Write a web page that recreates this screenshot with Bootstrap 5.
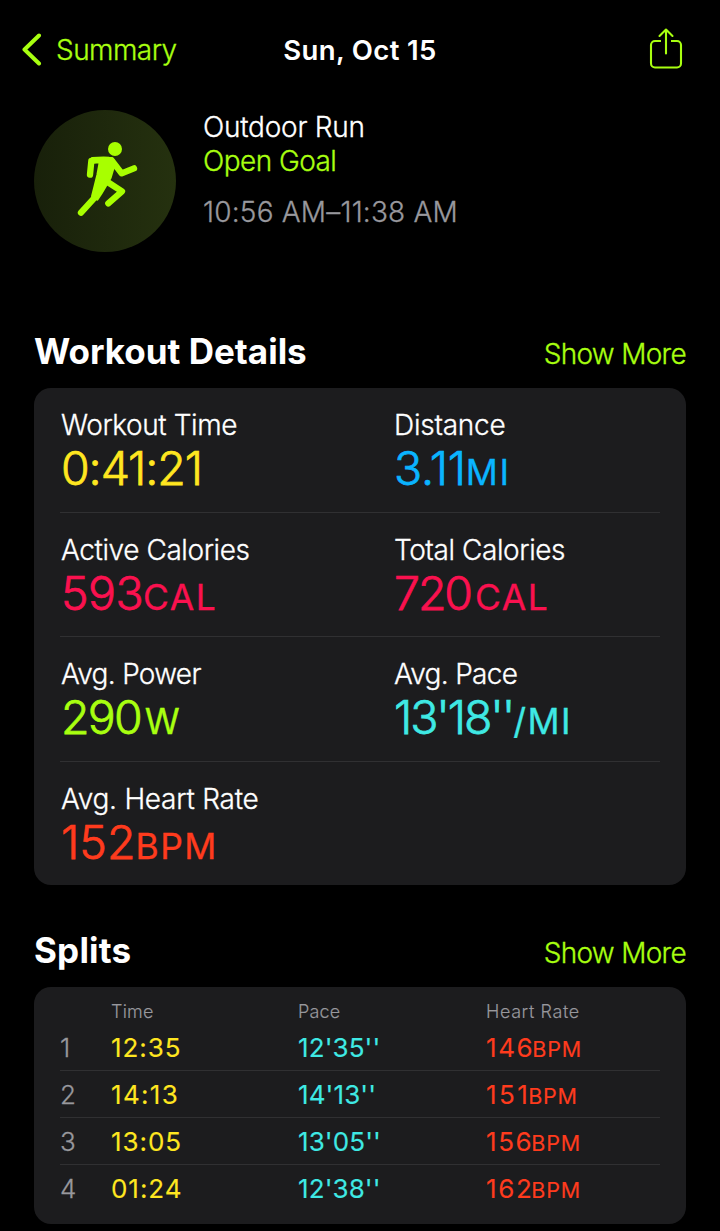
<!DOCTYPE html>
<html lang="en" data-bs-theme="dark">
<head>
<meta charset="utf-8">
<meta name="viewport" content="width=device-width, initial-scale=1">
<title>Workout</title>
<link href="https://cdn.jsdelivr.net/npm/bootstrap@5.3.0/dist/css/bootstrap.min.css" rel="stylesheet">
<style>
body{background:#000;color:#fff;font-family:Inter,"Liberation Sans",sans-serif;font-size:28px;line-height:34px;font-weight:300;-webkit-text-stroke:.3px;height:1231px;overflow:hidden}
a{color:inherit;text-decoration:none}
.lime{color:#a8ff10}.yellow{color:#ffe620}.blue{color:#0ab4ff}.pink{color:#fa114f}.aqua{color:#3fe9e4}.red{color:#ff3b1d}.dim{color:#98989d}
/* letter tracking steps */
.tk-2{letter-spacing:-.25px}.tk-4{letter-spacing:-.42px}.tk-5{letter-spacing:-.55px}.tk-7{letter-spacing:-.7px}.tk-11{letter-spacing:-1.1px}.tk-20{letter-spacing:-2.1px}.tk-18{letter-spacing:-1.8px}
.tk2{letter-spacing:.2px}.tk4{letter-spacing:.35px}.tk7{letter-spacing:.6px}
.topbar{height:99px;padding:0 22px}
.topbar>*{flex:1 1 0}
.topbar .back-label{margin-left:14px}
.share{margin-right:15px}
.day{font-weight:600;font-size:27.5px;-webkit-text-stroke:0}
.hero{height:230px;padding:11px 34px 0;gap:27px}
.when{margin-top:17px}
.sect-head{height:59px;padding:0 34px}
.sect-title{font-size:35px;line-height:44px;font-weight:700;-webkit-text-stroke:0}
.panel{margin:0 34px;background:#1c1c1e;border-radius:17px;padding:0 26px}
.metrics{height:497px;margin-bottom:43px}
.metric-row{height:124.67px;padding-top:20px}
.metric-row:not(:last-child),.split:not(:last-child){box-shadow:inset 0 -1px #303032}
.metric-row>div{width:333px;flex:none;padding-left:1px}
.val{font-size:46.500px;line-height:52px;white-space:nowrap;-webkit-text-stroke:.75px}
.unit{font-size:35.500px;line-height:1;letter-spacing:1.5px;font-weight:400;-webkit-text-stroke:.3px}
.splits{height:237px;padding-top:13px}
.split-grid{display:grid;grid-template-columns:51px 187px 188px 1fr}
.cap-row{font-size:18px;line-height:24px;height:24px;-webkit-text-stroke:.15px}
.split{height:47px;font-size:26px;line-height:47px;font-weight:400;-webkit-text-stroke:.1px}
.split .idx{font-weight:300;-webkit-text-stroke:.3px}
.split .time{letter-spacing:.95px}
.split .pace{letter-spacing:.1px}
.split .bpm{letter-spacing:1.6px}
.split .wide{letter-spacing:1.3px}
.split .wider{letter-spacing:2.4px}
.split .unit{font-size:21.500px;letter-spacing:.8px;margin-left:-2px;-webkit-text-stroke:.15px}
</style>
</head>
<body>
<header class="topbar d-flex align-items-center">
<a href="#" class="lime d-flex align-items-center"><svg width="20" height="34" viewBox="0 0 20 34" fill="none" stroke="currentColor" stroke-width="4" stroke-linecap="round" stroke-linejoin="round"><path d="M17 2.500 2.500 16.500 17 30.500"/></svg><span class="back-label tk-5">Summary</span></a>
<div class="day text-center tk4">Sun, Oct 15</div>
<a href="#" class="lime text-end" aria-label="Share"><svg class="share" width="34" height="44" viewBox="0 0 34 44" fill="none" stroke="currentColor" stroke-width="2.100" stroke-linecap="round" stroke-linejoin="round"><path stroke-linecap="butt" d="M12 13H6a4 4 0 0 0-4 4V35.500a4 4 0 0 0 4 4h22a4 4 0 0 0 4-4V17a4 4 0 0 0-4-4H22"/><path d="M17 25.500V1.700M10.500 8 17 1.500l6.500 6.500"/></svg></a>
</header>
<section class="hero d-flex align-items-start">
<svg width="142" height="142" viewBox="0 0 142 142"><defs><linearGradient id="disc"><stop stop-color="#18200a"/><stop offset="1" stop-color="#25310f"/></linearGradient></defs><circle cx="71" cy="71" r="71" fill="url(#disc)"/><g transform="translate(26 15) scale(.33333)" fill="#a8ff00" stroke="#a8ff00" stroke-linecap="round" stroke-linejoin="round"><circle cx="165" cy="72" r="21" stroke="none"/><path stroke-width="6" d="M96 99Q122 97 148 98q8 0 13 8l4 12-7 20-6 20-16 28-12 20-12 18-16-10 8-32 8-32 7-38-26 2z"/><path fill="none" stroke-width="19" d="M90 149 94 108M155 106l30 39 37-15M138 168l48 31-41 36M122 170l-18 48-41 45"/></g></svg>
<div><div class="tk-2">Outdoor Run</div><div class="lime tk-5">Open Goal</div><div class="when dim tk2">10:56 AM–11:38 AM</div></div>
</section>
<main>
<div class="sect-head d-flex justify-content-between align-items-baseline"><h2 class="sect-title mb-0">Workout Details</h2><a href="#" class="lime tk-7">Show More</a></div>
<section class="panel metrics">
<div class="metric-row d-flex"><div><div class="tk-4">Workout Time</div><div class="val yellow tk-11">0:41:21</div></div><div><div class="tk-2">Distance</div><div class="val blue tk-2">3.11<span class="unit">MI</span></div></div></div>
<div class="metric-row d-flex"><div><div class="tk-4">Active Calories</div><div class="val pink"><span class="tk-5">593</span><span class="unit">CAL</span></div></div><div><div class="tk-4">Total Calories</div><div class="val pink"><span class="tk-20 me-1">720</span><span class="unit">CAL</span></div></div></div>
<div class="metric-row d-flex"><div><div class="tk-7">Avg. Power</div><div class="val lime"><span class="tk-18 me-1">290</span><span class="unit">W</span></div></div><div><div class="tk-7">Avg. Pace</div><div class="val aqua"><span class="tk-20">13'18''</span><span class="unit">/MI</span></div></div></div>
<div class="metric-row d-flex"><div><div class="tk-2">Avg. Heart Rate</div><div class="val red">152<span class="unit">BPM</span></div></div></div>
</section>
<div class="sect-head d-flex justify-content-between align-items-baseline"><h2 class="sect-title mb-0 tk2">Splits</h2><a href="#" class="lime tk-7">Show More</a></div>
<section class="panel splits">
<div class="split-grid cap-row dim"><span></span><span class="tk2">Time</span><span class="tk2">Pace</span><span class="tk7">Heart Rate</span></div>
<div class="split-grid split"><span class="idx dim">1</span><span class="time yellow">12:35</span><span class="pace aqua">12'35''</span><span class="bpm red">146<span class="unit">BPM</span></span></div>
<div class="split-grid split"><span class="idx dim">2</span><span class="time wide yellow">14:13</span><span class="pace aqua">14'13''</span><span class="bpm wider red">151<span class="unit">BPM</span></span></div>
<div class="split-grid split"><span class="idx dim">3</span><span class="time yellow">13:05</span><span class="pace aqua">13'05''</span><span class="bpm red">156<span class="unit">BPM</span></span></div>
<div class="split-grid split"><span class="idx dim">4</span><span class="time yellow">01:24</span><span class="pace aqua">12'38''</span><span class="bpm red">162<span class="unit">BPM</span></span></div>
</section>
</main>
<script src="https://cdn.jsdelivr.net/npm/bootstrap@5.3.0/dist/js/bootstrap.bundle.min.js"></script>
</body>
</html>
